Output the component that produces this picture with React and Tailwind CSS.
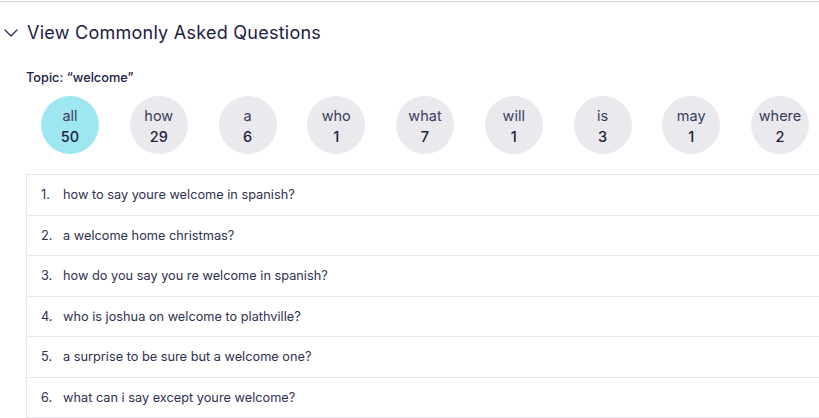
import React from 'react'

const topics = [
  { word: 'all', count: 50, active: true },
  { word: 'how', count: 29 },
  { word: 'a', count: 6 },
  { word: 'who', count: 1 },
  { word: 'what', count: 7 },
  { word: 'will', count: 1 },
  { word: 'is', count: 3 },
  { word: 'may', count: 1 },
  { word: 'where', count: 2 },
]

const questions = [
  'how to say youre welcome in spanish?',
  'a welcome home christmas?',
  'how do you say you re welcome in spanish?',
  'who is joshua on welcome to plathville?',
  'a surprise to be sure but a welcome one?',
  'what can i say except youre welcome?',
]

function Chevron() {
  return (
    <svg width="14" height="8" viewBox="0 0 14 8" fill="none" className="shrink-0">
      <path d="M1 1l6 6 6-6" stroke="#2a2a4a" strokeWidth="1.3" strokeLinecap="round" strokeLinejoin="round" />
    </svg>
  )
}

export default function App() {
  return (
    <div className="h-[418px] w-[819px] overflow-hidden bg-white font-['Inter','Liberation_Sans',sans-serif]">
      <div className="mt-px border-t border-[#d3d3d6]" />
      <button type="button" className="flex items-center gap-[9px] pl-[4px] pt-[20px] text-[#20203f]">
        <Chevron />
        <span className="text-[18px] leading-[22px] tracking-[0.25px]">View Commonly Asked Questions</span>
      </button>
      <div className="pl-[26px]">
        <div className="mt-[26px] text-[12.75px] font-medium leading-[16px] text-[#20203f]">Topic: “welcome”</div>
        <div className="mt-[10px] flex gap-[30.75px] pl-[15px]">
          {topics.map((t) => (
            <div
              key={t.word}
              className={`flex h-[58px] w-[58px] shrink-0 flex-col items-center justify-center rounded-full pt-px ${
                t.active ? 'bg-[#9ee6f0]' : 'bg-[#eae9ee]'
              }`}
            >
              <span className="text-[14.5px] leading-[21px] text-[#3b3b5c]">{t.word}</span>
              <span className="text-[14.5px] font-medium leading-[21px] text-[#1f1f3d]">{t.count}</span>
            </div>
          ))}
        </div>
        <ul className="mt-[20px] w-[820px] border-l border-t border-[#e8e8ec]">
          {questions.map((q, i) => (
            <li
              key={q}
              className="flex h-[40.5px] items-center border-b border-[#e8e8ec] pl-[14px] text-[12.75px] text-[#30304f]"
            >
              <span className="w-[22px]">{i + 1}.</span>
              <span>{q}</span>
            </li>
          ))}
        </ul>
      </div>
    </div>
  )
}
